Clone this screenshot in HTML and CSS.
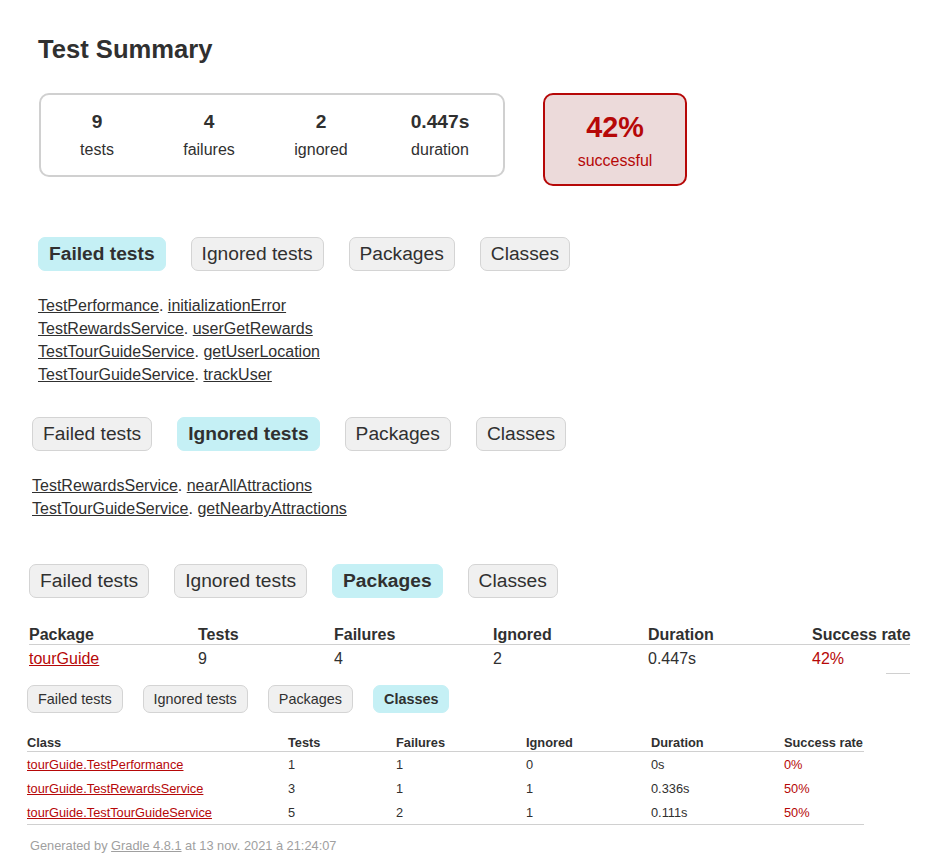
FILE: index.html
```html
<!DOCTYPE html>
<html lang="fr">
<head>
<meta charset="utf-8">
<title>Test results - Test Summary</title>
<link rel="stylesheet" href="styles.css">
</head>
<body>
<div class="page">
  <h1 class="title">Test Summary</h1>

  <div class="summary">
    <div class="summary-group">
      <div class="info-box">
        <div class="counter">9</div>
        <div class="label">tests</div>
      </div>
      <div class="info-box">
        <div class="counter">4</div>
        <div class="label">failures</div>
      </div>
      <div class="info-box">
        <div class="counter">2</div>
        <div class="label">ignored</div>
      </div>
      <div class="info-box info-box-wide">
        <div class="counter">0.447s</div>
        <div class="label">duration</div>
      </div>
    </div>
    <div class="success-rate">
      <div class="percent">42%</div>
      <div class="label">successful</div>
    </div>
  </div>

  <section class="sec sec-failed">
    <ul class="tab-links">
      <li class="tab selected">Failed tests</li>
      <li class="tab">Ignored tests</li>
      <li class="tab">Packages</li>
      <li class="tab">Classes</li>
    </ul>
    <ul class="link-list">
      <li><a class="ref" href="#">TestPerformance</a>. <a class="ref" href="#">initializationError</a></li>
      <li><a class="ref" href="#">TestRewardsService</a>. <a class="ref" href="#">userGetRewards</a></li>
      <li><a class="ref" href="#">TestTourGuideService</a>. <a class="ref" href="#">getUserLocation</a></li>
      <li><a class="ref" href="#">TestTourGuideService</a>. <a class="ref" href="#">trackUser</a></li>
    </ul>
  </section>

  <section class="sec sec-ignored">
    <ul class="tab-links">
      <li class="tab">Failed tests</li>
      <li class="tab selected">Ignored tests</li>
      <li class="tab">Packages</li>
      <li class="tab">Classes</li>
    </ul>
    <ul class="link-list">
      <li><a class="ref" href="#">TestRewardsService</a>. <a class="ref" href="#">nearAllAttractions</a></li>
      <li><a class="ref" href="#">TestTourGuideService</a>. <a class="ref" href="#">getNearbyAttractions</a></li>
    </ul>
  </section>

  <section class="sec sec-packages">
    <ul class="tab-links">
      <li class="tab">Failed tests</li>
      <li class="tab">Ignored tests</li>
      <li class="tab selected">Packages</li>
      <li class="tab">Classes</li>
    </ul>
    <table class="report pkg-table">
      <colgroup>
        <col class="pc1"><col class="pc2"><col class="pc3"><col class="pc4"><col class="pc5"><col class="pc6">
      </colgroup>
      <thead>
        <tr><th>Package</th><th>Tests</th><th>Failures</th><th>Ignored</th><th>Duration</th><th>Success rate</th></tr>
      </thead>
      <tbody>
        <tr><td><a class="fail-link" href="#">tourGuide</a></td><td>9</td><td>4</td><td>2</td><td>0.447s</td><td class="fail">42%</td></tr>
      </tbody>
    </table>
    <div class="table-tail"></div>
  </section>

  <section class="sec sec-classes">
    <ul class="tab-links tab-links-small">
      <li class="tab">Failed tests</li>
      <li class="tab">Ignored tests</li>
      <li class="tab">Packages</li>
      <li class="tab selected">Classes</li>
    </ul>
    <table class="report cls-table">
      <colgroup>
        <col class="cc1"><col class="cc2"><col class="cc3"><col class="cc4"><col class="cc5"><col class="cc6">
      </colgroup>
      <thead>
        <tr><th>Class</th><th>Tests</th><th>Failures</th><th>Ignored</th><th>Duration</th><th>Success rate</th></tr>
      </thead>
      <tbody>
        <tr><td><a class="fail-link" href="#">tourGuide.TestPerformance</a></td><td>1</td><td>1</td><td>0</td><td>0s</td><td class="fail">0%</td></tr>
        <tr><td><a class="fail-link" href="#">tourGuide.TestRewardsService</a></td><td>3</td><td>1</td><td>1</td><td>0.336s</td><td class="fail">50%</td></tr>
        <tr><td><a class="fail-link" href="#">tourGuide.TestTourGuideService</a></td><td>5</td><td>2</td><td>1</td><td>0.111s</td><td class="fail">50%</td></tr>
      </tbody>
    </table>
  </section>

  <div class="footer">Generated by <a class="footer-link" href="#">Gradle 4.8.1</a> at 13 nov. 2021 à 21:24:07</div>
</div>
</body>
</html>
```

FILE: styles.css
```css
* {
  box-sizing: border-box;
}

html, body {
  margin: 0;
  padding: 0;
  background: #ffffff;
}

body {
  font-family: "Liberation Sans", Arial, sans-serif;
  font-size: 16px;
  color: #303030;
}

a {
  color: #303030;
}

.page {
  padding-top: 34px;
}

.title {
  margin: 0 0 0 38px;
  font-size: 25.6px;
  line-height: 30px;
  font-weight: bold;
  white-space: nowrap;
}

/* summary */
.summary {
  display: flex;
  align-items: flex-start;
  gap: 38px;
  margin: 29px 0 0 39px;
}

.summary-group {
  display: flex;
  width: 466px;
  border: 2px solid #d0d0d0;
  border-radius: 10px;
}

.info-box {
  width: 112px;
  padding: 16px 0;
  text-align: center;
}

.info-box-wide {
  width: 126px;
}

.counter {
  font-size: 19.2px;
  line-height: 22px;
  font-weight: bold;
  margin-bottom: 8px;
}

.label {
  font-size: 16px;
  line-height: 18px;
}

.success-rate {
  width: 144px;
  padding: 16px 0 14px;
  text-align: center;
  border: 2px solid #b60808;
  border-radius: 10px;
  background: #ecdada;
  color: #b60808;
}

.percent {
  font-size: 28.8px;
  line-height: 33px;
  font-weight: bold;
  margin-bottom: 8px;
}

/* tabs */
.tab-links {
  display: flex;
  margin: 0;
  padding: 0;
  list-style: none;
}

.tab {
  padding: 5px 10px;
  margin-right: 25px;
  border: 1px solid #d4d4d4;
  border-radius: 7px;
  background: #f0f0f0;
  font-size: 19.2px;
  line-height: 22px;
  white-space: nowrap;
}

.tab.selected {
  background: #c5f0f5;
  border-color: #c5f0f5;
  font-weight: bold;
}

.tab-links-small .tab {
  font-size: 14.4px;
  line-height: 16px;
  margin-right: 20px;
}

/* link lists */
.link-list {
  display: flex;
  flex-direction: column;
  gap: 5px;
  margin: 26px 0 0 0;
  padding: 0;
  list-style: none;
}

.link-list li {
  line-height: 18px;
  white-space: nowrap;
}

.ref {
  color: #303030;
  text-decoration: underline;
}

/* sections */
.sec-failed {
  margin: 51px 0 0 38px;
}

.sec-ignored {
  margin: 33px 0 0 32px;
}

.sec-packages {
  margin: 46px 0 0 29px;
}

.sec-classes {
  margin: 11px 0 0 27px;
}

/* tables */
.report {
  border-collapse: collapse;
  table-layout: fixed;
}

.report th {
  text-align: left;
  font-weight: bold;
  white-space: nowrap;
  padding: 0;
  border-bottom: 1px solid #d0d0d0;
}

.report td {
  white-space: nowrap;
  padding: 5px 0;
}

.pkg-table {
  width: 881px;
  margin-top: 28px;
}

.pkg-table th {
  line-height: 18px;
}

.pkg-table td {
  line-height: 18px;
}

.pc1 { width: 169px; }
.pc2 { width: 136px; }
.pc3 { width: 159px; }
.pc4 { width: 155px; }
.pc5 { width: 164px; }
.pc6 { width: 98px; }

.table-tail {
  width: 24px;
  height: 1px;
  margin-left: 857px;
  background: #d0d0d0;
}

.cls-table {
  width: 837px;
  margin-top: 22px;
  font-size: 12.8px;
  border-bottom: 1px solid #d0d0d0;
}

.cls-table th {
  line-height: 16px;
}

.cls-table td {
  line-height: 14px;
  padding: 6px 0 4px;
}

.cc1 { width: 261px; }
.cc2 { width: 108px; }
.cc3 { width: 130px; }
.cc4 { width: 125px; }
.cc5 { width: 133px; }
.cc6 { width: 80px; }

.fail,
.fail-link {
  color: #b60808;
}

.fail-link {
  text-decoration: underline;
}

/* footer */
.footer {
  margin: 13px 0 0 30px;
  font-size: 12.8px;
  line-height: 15px;
  color: #a0a0a0;
  white-space: nowrap;
}

.footer-link {
  color: #a0a0a0;
  text-decoration: underline;
}
```
